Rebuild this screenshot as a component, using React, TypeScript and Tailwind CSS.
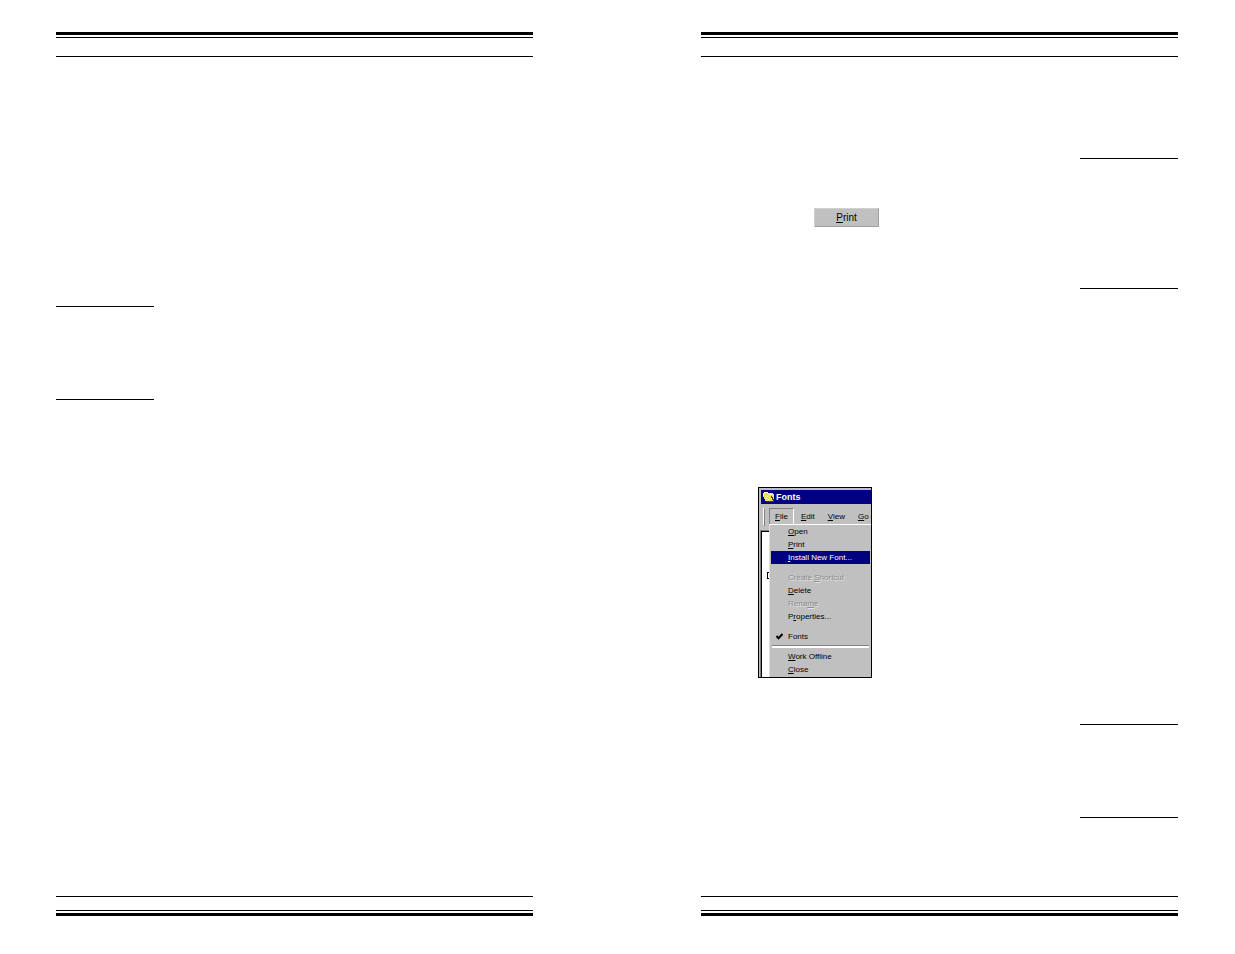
import type { ReactNode } from 'react'

interface MenuEntry {
  before?: string
  hotkey?: string
  after: string
  state?: 'active' | 'disabled' | 'checked'
}

const menuBar: MenuEntry[] = [
  { hotkey: 'F', after: 'ile', state: 'active' },
  { hotkey: 'E', after: 'dit' },
  { hotkey: 'V', after: 'iew' },
  { hotkey: 'G', after: 'o' },
]

const openItems: MenuEntry[] = [
  { hotkey: 'O', after: 'pen' },
  { hotkey: 'P', after: 'rint' },
  { hotkey: 'I', after: 'nstall New Font...', state: 'active' },
]

const editItems: MenuEntry[] = [
  { before: 'Create ', hotkey: 'S', after: 'hortcut', state: 'disabled' },
  { hotkey: 'D', after: 'elete' },
  { before: 'Rena', hotkey: 'm', after: 'e', state: 'disabled' },
  { before: 'P', hotkey: 'r', after: 'operties...' },
]

const viewItems: MenuEntry[] = [{ after: 'Fonts', state: 'checked' }]

const closeItems: MenuEntry[] = [
  { hotkey: 'W', after: 'ork Offline' },
  { hotkey: 'C', after: 'lose' },
]

function Label({ before, hotkey, after }: MenuEntry) {
  return (
    <>
      {before}
      {hotkey && <span className="underline underline-offset-1 decoration-1">{hotkey}</span>}
      {after}
    </>
  )
}

function MenuItems({ items }: { items: MenuEntry[] }) {
  return (
    <>
      {items.map((item) => (
        <button
          key={item.after}
          type="button"
          disabled={item.state === 'disabled'}
          className={`flex h-[13px] w-full items-center whitespace-pre text-left ${
            item.state === 'active'
              ? 'bg-[#000080] text-white'
              : item.state === 'disabled'
                ? 'text-[#8c8c8c] [text-shadow:1px_1px_0_#e4e4e4]'
                : 'text-black'
          }`}
        >
          <span className="flex w-[17px] shrink-0 justify-center">
            {item.state === 'checked' && (
              <svg className="h-[7px] w-[7px]" viewBox="0 0 7 7" fill="none" stroke="#000" strokeWidth="2">
                <path d="M0.5 3 L2.5 5.2 L6.5 1" />
              </svg>
            )}
          </span>
          <span>
            <Label {...item} />
          </span>
        </button>
      ))}
    </>
  )
}

function FolderIcon() {
  return (
    <svg className="h-3 w-3 shrink-0" viewBox="0 0 12 12" shapeRendering="crispEdges">
      <path d="M1 1h4v1h5v1h1v7H2V8H1V6H0V2h1z" fill="#ece04c" />
      <path d="M1 1h4v1H1zM0 2h1v3H0zM5 3h5v1H5z" fill="#fffbb0" />
      <path d="M2 5h1v1H2zM4 5h1v1H4zM6 6h1v1H6zM3 7h1v1H3zM5 8h1v1H5zM8 7h1v1H8z" fill="#fffde0" />
      <path d="M9 2h1v1h1v2h-1V4H9z" fill="#d8d8d8" />
      <path d="M8 5h1v1h1v2h1v2h-1V9H9V7H8zM3 10h8v1H3z" fill="#3a3a20" />
    </svg>
  )
}

function FontsWindow() {
  return (
    <div className="relative flex h-[191px] w-[114px] flex-col overflow-hidden border border-black bg-[#c0c0c0] pt-[2px] pl-px font-['Liberation_Sans',sans-serif] text-[8px] leading-none">
      <div className="ml-px flex h-[14px] shrink-0 items-center gap-px bg-[#000080] pl-[2px] text-[9px] font-bold text-white">
        <FolderIcon />
        <span>Fonts</span>
      </div>
      <div className="flex h-[26px] shrink-0 items-center pl-[3px]">
        <span className="h-[18px] w-[3px] border border-t-white border-r-[#808080] border-b-[#808080] border-l-white" />
        <div className="ml-1 flex h-[18px] gap-px">
          {menuBar.map((item) => (
            <button
              key={item.after}
              type="button"
              className={`border px-[5px] ${
                item.state === 'active'
                  ? 'border-t-[#808080] border-r-white border-b-transparent border-l-[#808080]'
                  : 'border-transparent'
              }`}
            >
              <Label {...item} />
            </button>
          ))}
        </div>
      </div>
      <div className="flex-1 border-t border-l border-[#808080]">
        <div className="h-full border-t border-l border-black bg-white pt-10 pl-[5px]">
          <div className="h-[7px] w-[4px] border border-r-0 border-black" />
        </div>
      </div>
      <div className="absolute top-9 right-0 bottom-0 left-[10px] border-t border-l border-t-white border-l-[#dfdfdf] bg-[#c0c0c0] pr-px pl-px">
        <MenuItems items={openItems} />
        <div className="h-[7px]" />
        <MenuItems items={editItems} />
        <div className="h-[7px]" />
        <MenuItems items={viewItems} />
        <div className="mx-px mt-[2px] mb-[2px] h-[3px] border-t border-b-2 border-t-[#808080] border-b-white" />
        <MenuItems items={closeItems} />
      </div>
    </div>
  )
}

function Page({ children }: { children: ReactNode }) {
  return (
    <section className="flex flex-col">
      <header className="h-[25px] border-t-3 border-b border-black pt-[2px]">
        <div className="h-px bg-black" />
      </header>
      <div className="flex flex-1 flex-col">{children}</div>
      <footer className="flex h-5 flex-col justify-end border-t border-b-3 border-black pb-[2px]">
        <div className="h-px bg-black" />
      </footer>
    </section>
  )
}

export default function App() {
  return (
    <main className="grid min-h-screen grid-cols-2 gap-x-[168px] bg-white pt-8 pr-[57px] pb-[38px] pl-14">
      <Page>
        <hr className="mt-[249px] w-[98px] border-black" />
        <hr className="mt-[92px] w-[98px] border-black" />
      </Page>
      <Page>
        <hr className="mt-[101px] w-[98px] self-end border-black" />
        <button
          type="button"
          className="mt-[49px] ml-[113px] h-[19px] w-[65px] border border-t-[#d0d0d0] border-r-[#a0a0a0] border-b-[#a0a0a0] border-l-[#d0d0d0] bg-[#c0c0c0] font-['Liberation_Sans',sans-serif] text-[10px] leading-none"
        >
          <Label hotkey="P" after="rint" />
        </button>
        <hr className="mt-[61px] w-[98px] self-end border-black" />
        <div className="mt-[198px] ml-[57px]">
          <FontsWindow />
        </div>
        <hr className="mt-[46px] w-[98px] self-end border-black" />
        <hr className="mt-[92px] mb-[78px] w-[98px] self-end border-black" />
      </Page>
    </main>
  )
}
